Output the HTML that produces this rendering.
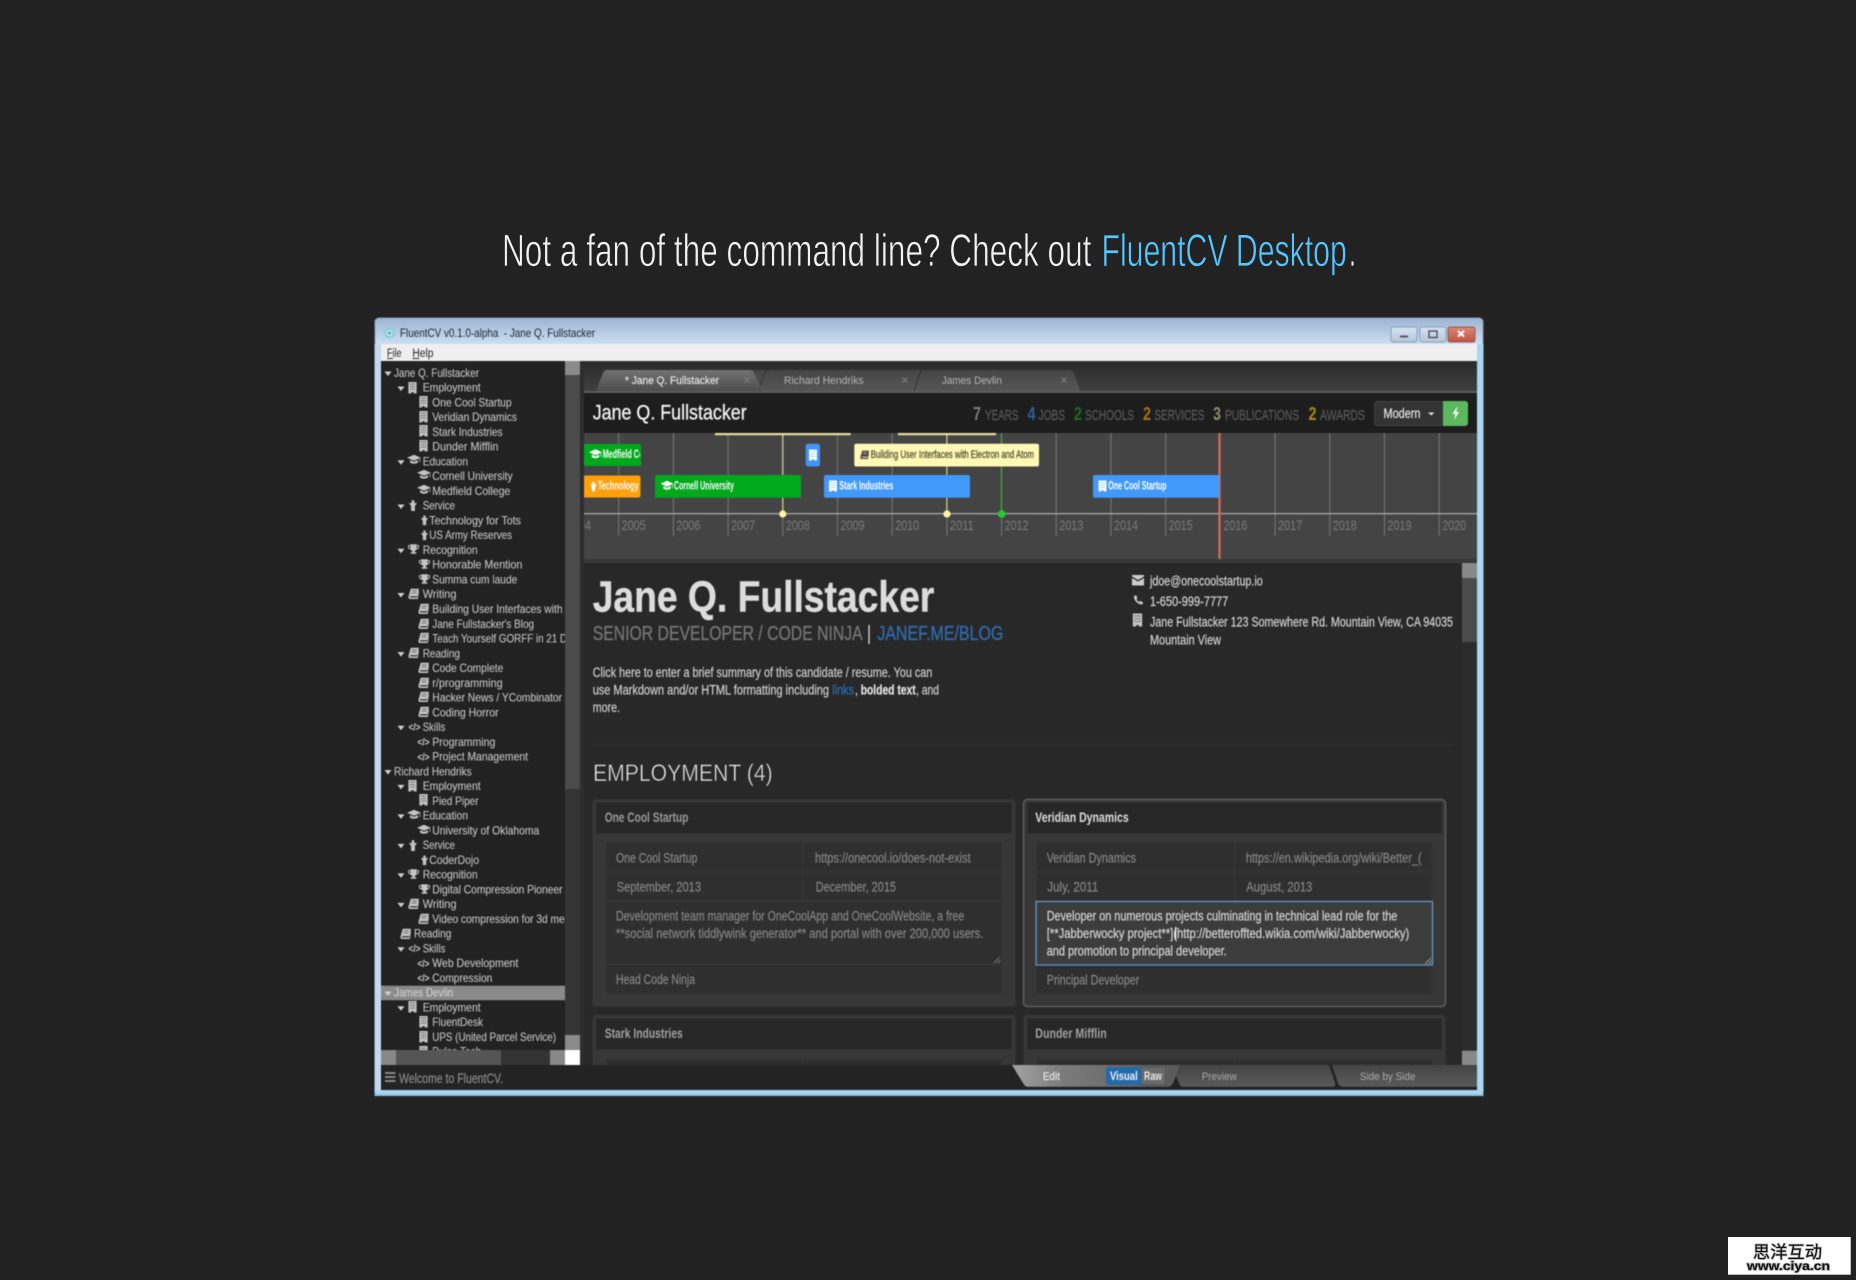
<!DOCTYPE html>
<html lang="en"><head><meta charset="utf-8"><title>FluentCV Desktop</title>
<style>
html,body{margin:0;padding:0;background:#222;width:1856px;height:1280px;overflow:hidden}
svg{display:block;font-family:"Liberation Sans",Arial,sans-serif}
text{white-space:pre}
.w{filter:blur(.45px)}
</style></head><body>
<svg xmlns="http://www.w3.org/2000/svg" width="1856" height="1280" viewBox="0 0 1856 1280">
<defs>
<linearGradient id="tb" x1="0" y1="0" x2="0" y2="1"><stop offset="0" stop-color="#9db4d2"/><stop offset="1" stop-color="#cbdef2"/></linearGradient>
<linearGradient id="tbar" x1="0" y1="0" x2="0" y2="1"><stop offset="0" stop-color="#2a2a2a"/><stop offset="1" stop-color="#414141"/></linearGradient>
<linearGradient id="t1" x1="0" y1="0" x2="0" y2="1"><stop offset="0" stop-color="#727272"/><stop offset="1" stop-color="#4e4e4e"/></linearGradient>
<linearGradient id="t2" x1="0" y1="0" x2="0" y2="1"><stop offset="0" stop-color="#454545"/><stop offset="1" stop-color="#565656"/></linearGradient>
<linearGradient id="edit" x1="0" y1="0" x2="1" y2="0"><stop offset="0" stop-color="#a2a2a2"/><stop offset=".3" stop-color="#7c7c7c"/><stop offset="1" stop-color="#585858"/></linearGradient>
<linearGradient id="bt" x1="0" y1="0" x2="0" y2="1"><stop offset="0" stop-color="#444"/><stop offset="1" stop-color="#5a5a5a"/></linearGradient>
<linearGradient id="wb" x1="0" y1="0" x2="0" y2="1"><stop offset="0" stop-color="#d6e2f0"/><stop offset="1" stop-color="#b4c8de"/></linearGradient>
<linearGradient id="wc" x1="0" y1="0" x2="0" y2="1"><stop offset="0" stop-color="#d78a78"/><stop offset="1" stop-color="#bf5440"/></linearGradient>
<symbol id="bd" viewBox="0 0 10 14"><path fill-rule="evenodd" d="M0 0h10v14H6.500v-1.500h-3V14H0zM2.200 2.200v1h1.200v-1zM4.400 2.200v1h1.200v-1zM6.600 2.200v1h1.200v-1zM2.200 5.200v1h1.200v-1zM4.400 5.200v1h1.200v-1zM6.600 5.200v1h1.200v-1zM2.200 8.200v1h1.200v-1zM4.400 8.200v1h1.200v-1zM6.600 8.200v1h1.200v-1z"/></symbol>
<symbol id="cap" viewBox="0 0 16 14" preserveAspectRatio="none"><path d="M8 2 16 5.500 8 9 0 5.500zM3.500 8.300v3c2.500 1.600 6.500 1.600 9 0v-3L8 10.300zM14.300 6.800v4h.8v-4.400z"/></symbol>
<symbol id="sv" viewBox="0 0 10 14"><circle cx="5" cy="2" r="1.900"/><path d="M0 3.800h10L7.400 8v6H2.600V8z"/></symbol>
<symbol id="tr" viewBox="0 0 14 14"><path fill-rule="evenodd" d="M3 1h8v1h3v2.600c0 1.600-1.500 2.800-3.300 3-.5.9-1.300 1.500-2.200 1.800V11h2v2H3.500v-2h2V9.400C4.600 9.100 3.800 8.500 3.300 7.600 1.500 7.400 0 6.200 0 4.600V2h3zM1.200 3.200v1.400c0 .8.800 1.500 1.800 1.700V3.200zM11 3.200v3.100c1-.2 1.800-.9 1.800-1.700V3.200z"/></symbol>
<symbol id="bk" viewBox="0 0 14 14"><path d="M3.500 1H14l-2 9.500H3.500c-1.300 0-1.300 1.500 0 1.500H12l1.300-7.500.7.500L12.600 14H2.500C.8 14 .2 12.700.6 11zM5 3.500v.7h6l.2-.7zM4.500 6v.7h6l.2-.7z"/></symbol>
<clipPath id="cs"><rect x="381" y="361" width="184" height="689"/></clipPath>
<clipPath id="ct"><rect x="584" y="433" width="893" height="126"/></clipPath>
<clipPath id="cm"><rect x="584" y="563" width="878" height="502"/></clipPath>
</defs>

<rect width="1856" height="1280" fill="#222"/>

<!-- Heading -->
<g font-size="45" stroke="#222" stroke-width=".75">
<text x="502" y="266" fill="#f2f2f2" textLength="589.400" lengthAdjust="spacingAndGlyphs">Not a fan of the command line? Check out</text>
<text x="1101.500" y="266" fill="#55c6ff" textLength="245.300" lengthAdjust="spacingAndGlyphs">FluentCV Desktop</text>
<text x="1349" y="266" fill="#f2f2f2" textLength="7" lengthAdjust="spacingAndGlyphs">.</text>
</g>

<g class="w">
<!-- Window frame -->
<rect x="374.500" y="318" width="1109" height="778" rx="4" fill="#aad4f0"/>
<rect x="375" y="344" width="6" height="746" fill="#c4d9ec"/>
<rect x="374.500" y="1094" width="1109" height="2" fill="#8fc6d8"/>
<path d="M375 344V322a4 4 0 0 1 4-4H1479a4 4 0 0 1 4 4V344z" fill="url(#tb)"/>
<path d="M375 344V322a4 4 0 0 1 4-4H1479a4 4 0 0 1 4 4V344" fill="none" stroke="#8c9bad" stroke-width="1"/>
<circle cx="389.500" cy="333" r="5.500" fill="#8fcfdd"/><circle cx="389.500" cy="333" r="3" fill="#c8e8ee"/><circle cx="389.500" cy="333" r="1.500" fill="#4ea4b8"/>
<text x="400" y="337" font-size="12" fill="#1c2430" textLength="195" lengthAdjust="spacingAndGlyphs">FluentCV v0.1.0-alpha  - Jane Q. Fullstacker</text>
<rect x="1391" y="327" width="26" height="15" rx="2" fill="url(#wb)" stroke="#8aa0bb"/>
<rect x="1400" y="335.500" width="8" height="2" fill="#556"/>
<rect x="1420" y="327" width="26" height="15" rx="2" fill="url(#wb)" stroke="#8aa0bb"/>
<rect x="1429" y="331" width="8" height="6.500" fill="none" stroke="#445" stroke-width="1.300"/>
<rect x="1448" y="327" width="27" height="15" rx="2" fill="url(#wc)" stroke="#96594e"/>
<path d="M1458 331l6 5.500m0-5.500l-6 5.500" stroke="#fff" stroke-width="2" fill="none"/>

<!-- Menu -->
<rect x="381" y="344" width="1096" height="17" fill="#efefef"/>
<text x="387" y="357" font-size="11.500" fill="#222" textLength="14.500" lengthAdjust="spacingAndGlyphs">File</text>
<text x="412.400" y="357" font-size="11.500" fill="#222" textLength="21" lengthAdjust="spacingAndGlyphs">Help</text>
<path d="M387 358.500h6M412.400 358.500h7" stroke="#333" stroke-width="1"/>

<!-- Sidebar -->
<rect x="381" y="361" width="184" height="704" fill="#222"/>
<rect x="381" y="985.700" width="184" height="14.500" fill="#8a8a8a"/>
<g clip-path="url(#cs)">
<path fill="#d0d0d0" d="M384.500 371.500h7l-3.500 4.500zM384.500 770h7l-3.500 4.500zM384.500 991.500h7l-3.500 4.500zM397.500 386.500h7l-3.500 4.500zM397.500 460.200h7l-3.500 4.500zM397.500 504.500h7l-3.500 4.500zM397.500 548.800h7l-3.500 4.500zM397.500 593h7l-3.500 4.500zM397.500 652.100h7l-3.500 4.500zM397.500 725.800h7l-3.500 4.500zM397.500 784.900h7l-3.500 4.500zM397.500 814.400h7l-3.500 4.500zM397.500 843.900h7l-3.500 4.500zM397.500 873.400h7l-3.500 4.500zM397.500 902.900h7l-3.500 4.500zM397.500 947.200h7l-3.500 4.500zM397.500 1006.200h7l-3.500 4.500z"/>
<g fill="#c4c4c4">
<use href="#bd" x="408" y="382" width="9" height="11.500"/>
<use href="#bd" x="419" y="396" width="9" height="11.500"/>
<use href="#bd" x="419" y="411" width="9" height="11.500"/>
<use href="#bd" x="419" y="425" width="9" height="11.500"/>
<use href="#bd" x="419" y="440" width="9" height="11.500"/>
<use href="#cap" x="407" y="453" width="14" height="12"/>
<use href="#cap" x="417" y="468" width="14" height="12"/>
<use href="#cap" x="417" y="483" width="14" height="12"/>
<use href="#sv" x="409" y="500" width="8" height="11"/>
<use href="#sv" x="421" y="515" width="7" height="10.500"/>
<use href="#sv" x="421" y="530" width="7" height="10.500"/>
<use href="#tr" x="408" y="543" width="11" height="12"/>
<use href="#tr" x="419" y="558" width="11" height="12"/>
<use href="#tr" x="419" y="573" width="11" height="12"/>
<use href="#bk" x="408" y="588" width="11" height="11"/>
<use href="#bk" x="418" y="603" width="11" height="11"/>
<use href="#bk" x="418" y="618" width="11" height="11"/>
<use href="#bk" x="418" y="632" width="11" height="11"/>
<use href="#bk" x="408" y="647" width="11" height="11"/>
<use href="#bk" x="418" y="662" width="11" height="11"/>
<use href="#bk" x="418" y="677" width="11" height="11"/>
<use href="#bk" x="418" y="691" width="11" height="11"/>
<use href="#bk" x="418" y="706" width="11" height="11"/>
<use href="#bd" x="408" y="780" width="9" height="11.500"/>
<use href="#bd" x="419" y="794" width="9" height="11.500"/>
<use href="#cap" x="407" y="808" width="14" height="12"/>
<use href="#cap" x="417" y="823" width="14" height="12"/>
<use href="#sv" x="409" y="840" width="8" height="11"/>
<use href="#sv" x="421" y="855" width="7" height="10.500"/>
<use href="#tr" x="408" y="868" width="11" height="12"/>
<use href="#tr" x="419" y="883" width="11" height="12"/>
<use href="#bk" x="408" y="898" width="11" height="11"/>
<use href="#bk" x="418" y="913" width="11" height="11"/>
<use href="#bk" x="400" y="928" width="11" height="11"/>
<use href="#bd" x="408" y="1001" width="9" height="11.500"/>
<use href="#bd" x="419" y="1016" width="9" height="11.500"/>
<use href="#bd" x="419" y="1031" width="9" height="11.500"/>
<use href="#bd" x="419" y="1046" width="9" height="11.500"/>
</g>
<g font-size="12" fill="#c2c2c2" stroke="#c2c2c2" stroke-width=".12" transform="translate(0,-.4)">
<text x="394" y="377.300" textLength="85" lengthAdjust="spacingAndGlyphs">Jane Q. Fullstacker</text>
<text x="422.700" y="392.100" textLength="58" lengthAdjust="spacingAndGlyphs">Employment</text>
<text x="432.300" y="406.800" textLength="79.300" lengthAdjust="spacingAndGlyphs">One Cool Startup</text>
<text x="432.300" y="421.600" textLength="84.700" lengthAdjust="spacingAndGlyphs">Veridian Dynamics</text>
<text x="432.300" y="436.300" textLength="70.300" lengthAdjust="spacingAndGlyphs">Stark Industries</text>
<text x="432.300" y="451.100" textLength="66" lengthAdjust="spacingAndGlyphs">Dunder Mifflin</text>
<text x="422.700" y="465.800" textLength="45.300" lengthAdjust="spacingAndGlyphs">Education</text>
<text x="432.300" y="480.600" textLength="80.300" lengthAdjust="spacingAndGlyphs">Cornell University</text>
<text x="432.300" y="495.300" textLength="78" lengthAdjust="spacingAndGlyphs">Medfield College</text>
<text x="422.700" y="510.100" textLength="32.300" lengthAdjust="spacingAndGlyphs">Service</text>
<text x="429.300" y="524.900" textLength="91.700" lengthAdjust="spacingAndGlyphs">Technology for Tots</text>
<text x="429.300" y="539.600" textLength="82.700" lengthAdjust="spacingAndGlyphs">US Army Reserves</text>
<text x="422.700" y="554.400" textLength="55" lengthAdjust="spacingAndGlyphs">Recognition</text>
<text x="432.300" y="569.100" textLength="90" lengthAdjust="spacingAndGlyphs">Honorable Mention</text>
<text x="432.300" y="583.900" textLength="85" lengthAdjust="spacingAndGlyphs">Summa cum laude</text>
<text x="422.700" y="598.600" textLength="33.700" lengthAdjust="spacingAndGlyphs">Writing</text>
<text x="432.300" y="613.400" textLength="130.300" lengthAdjust="spacingAndGlyphs">Building User Interfaces with</text>
<text x="432.300" y="628.200" textLength="101.700" lengthAdjust="spacingAndGlyphs">Jane Fullstacker's Blog</text>
<text x="432.300" y="642.900" textLength="150" lengthAdjust="spacingAndGlyphs">Teach Yourself GORFF in 21 Days</text>
<text x="422.700" y="657.700" textLength="37.300" lengthAdjust="spacingAndGlyphs">Reading</text>
<text x="432.300" y="672.400" textLength="71" lengthAdjust="spacingAndGlyphs">Code Complete</text>
<text x="432.300" y="687.200" textLength="70.300" lengthAdjust="spacingAndGlyphs">r/programming</text>
<text x="432.300" y="701.900" textLength="129.700" lengthAdjust="spacingAndGlyphs">Hacker News / YCombinator</text>
<text x="432.300" y="716.700" textLength="66.300" lengthAdjust="spacingAndGlyphs">Coding Horror</text>
<text x="422.700" y="731.400" textLength="22.700" lengthAdjust="spacingAndGlyphs">Skills</text>
<text x="432.300" y="746.200" textLength="63" lengthAdjust="spacingAndGlyphs">Programming</text>
<text x="432.300" y="761" textLength="95.700" lengthAdjust="spacingAndGlyphs">Project Management</text>
<text x="394" y="775.700" textLength="77.700" lengthAdjust="spacingAndGlyphs">Richard Hendriks</text>
<text x="422.700" y="790.500" textLength="58" lengthAdjust="spacingAndGlyphs">Employment</text>
<text x="432.300" y="805.200" textLength="46.300" lengthAdjust="spacingAndGlyphs">Pied Piper</text>
<text x="422.700" y="820" textLength="45.300" lengthAdjust="spacingAndGlyphs">Education</text>
<text x="432.300" y="834.700" textLength="107" lengthAdjust="spacingAndGlyphs">University of Oklahoma</text>
<text x="422.700" y="849.500" textLength="32.300" lengthAdjust="spacingAndGlyphs">Service</text>
<text x="429.300" y="864.200" textLength="49.700" lengthAdjust="spacingAndGlyphs">CoderDojo</text>
<text x="422.700" y="879" textLength="55" lengthAdjust="spacingAndGlyphs">Recognition</text>
<text x="432.300" y="893.800" textLength="130.300" lengthAdjust="spacingAndGlyphs">Digital Compression Pioneer</text>
<text x="422.700" y="908.500" textLength="33.700" lengthAdjust="spacingAndGlyphs">Writing</text>
<text x="432.300" y="923.300" textLength="146" lengthAdjust="spacingAndGlyphs">Video compression for 3d media</text>
<text x="414" y="938" textLength="37.300" lengthAdjust="spacingAndGlyphs">Reading</text>
<text x="422.700" y="952.800" textLength="22.700" lengthAdjust="spacingAndGlyphs">Skills</text>
<text x="432.300" y="967.500" textLength="86" lengthAdjust="spacingAndGlyphs">Web Development</text>
<text x="432.300" y="982.300" textLength="60" lengthAdjust="spacingAndGlyphs">Compression</text>
<text x="394" y="997.100" textLength="59.300" lengthAdjust="spacingAndGlyphs" fill="#d4d4d4">James Devlin</text>
<text x="422.700" y="1011.800" textLength="58" lengthAdjust="spacingAndGlyphs">Employment</text>
<text x="432.300" y="1026.600" textLength="50.700" lengthAdjust="spacingAndGlyphs">FluentDesk</text>
<text x="432.300" y="1041.300" textLength="123.700" lengthAdjust="spacingAndGlyphs">UPS (United Parcel Service)</text>
<text x="432.300" y="1056.100" textLength="49" lengthAdjust="spacingAndGlyphs">Pulse Tech</text>
<text x="408.500" y="731" font-size="10" textLength="12" lengthAdjust="spacingAndGlyphs" font-weight="bold">&lt;/&gt;</text>
<text x="417.500" y="746" font-size="10" textLength="12" lengthAdjust="spacingAndGlyphs" font-weight="bold">&lt;/&gt;</text>
<text x="417.500" y="761" font-size="10" textLength="12" lengthAdjust="spacingAndGlyphs" font-weight="bold">&lt;/&gt;</text>
<text x="408.500" y="952.500" font-size="10" textLength="12" lengthAdjust="spacingAndGlyphs" font-weight="bold">&lt;/&gt;</text>
<text x="417.500" y="967.500" font-size="10" textLength="12" lengthAdjust="spacingAndGlyphs" font-weight="bold">&lt;/&gt;</text>
<text x="417.500" y="982" font-size="10" textLength="12" lengthAdjust="spacingAndGlyphs" font-weight="bold">&lt;/&gt;</text>
</g>
</g>
<!-- Sidebar scrollbars -->
<rect x="565" y="361" width="15" height="689" fill="#353535"/>
<rect x="565" y="375" width="15" height="414" fill="#4b4b4b"/>
<rect x="565" y="361" width="15" height="14" fill="#8a8a8a"/>
<rect x="565" y="1035" width="15" height="15" fill="#8a8a8a"/>
<rect x="565" y="1050" width="15" height="15" fill="#fff"/>
<rect x="381" y="1050" width="184" height="15" fill="#333"/>
<rect x="381" y="1050" width="15" height="15" fill="#888"/>
<rect x="396" y="1050" width="105" height="15" fill="#555"/>
<rect x="550" y="1050" width="15" height="15" fill="#888"/>
<rect x="580" y="361" width="4" height="704" fill="#2d2d2d"/>

<!-- Tab bar -->
<rect x="584" y="361" width="893" height="32" fill="url(#tbar)"/>
<rect x="584" y="391" width="893" height="2" fill="#5c5c5c"/>
<path d="M762 391 753 372.500q-1-2.500-4-2.500H908q4 0 5 3l6 18z" fill="url(#t2)"/>
<path d="M918 391 913 373q-1-3-4-3H1069q4 0 5 3l6 18z" fill="url(#t2)"/>
<path d="M758 391 765 373q1-3 4-3h1M914 391 920 373q1-3 4-3h1" stroke="#333" stroke-width="1" fill="none"/>
<path d="M596 391 603 373q1-3 4-3H749q4 0 5 3l8.500 18z" fill="url(#t1)"/>
<g font-size="11">
<text x="625" y="384" fill="#e8e8e8" stroke="#e8e8e8" stroke-width=".15" textLength="94" lengthAdjust="spacingAndGlyphs">* Jane Q. Fullstacker</text>
<text x="784" y="384" fill="#b4b4b4" textLength="79.600" lengthAdjust="spacingAndGlyphs">Richard Hendriks</text>
<text x="941.700" y="384" fill="#b4b4b4" textLength="60.300" lengthAdjust="spacingAndGlyphs">James Devlin</text>
</g>
<path d="M744.500 377.500l5 5m0-5l-5 5M902.500 377.500l5 5m0-5l-5 5M1061.500 377.500l5 5m0-5l-5 5" stroke="#7e7e7e" stroke-width="1.200" fill="none"/>

<!-- Header -->
<rect x="584" y="393" width="893" height="40" fill="#1d1d1d"/>
<text x="592.700" y="419.500" font-size="21.500" fill="#f4f4f4" stroke="#f4f4f4" stroke-width=".3" textLength="154" lengthAdjust="spacingAndGlyphs">Jane Q. Fullstacker</text>
<g font-size="18.500" font-weight="bold">
<text x="973" y="420" fill="#7c7c7c" textLength="8" lengthAdjust="spacingAndGlyphs">7</text>
<text x="1027.500" y="420" fill="#2c5f9c" textLength="8" lengthAdjust="spacingAndGlyphs">4</text>
<text x="1074" y="420" fill="#1c6a22" textLength="8" lengthAdjust="spacingAndGlyphs">2</text>
<text x="1143" y="420" fill="#a8720f" textLength="8" lengthAdjust="spacingAndGlyphs">2</text>
<text x="1213" y="420" fill="#8e8e62" textLength="8" lengthAdjust="spacingAndGlyphs">3</text>
<text x="1308.500" y="420" fill="#a68a1a" textLength="8" lengthAdjust="spacingAndGlyphs">2</text>
</g>
<g font-size="15" fill="#585858" stroke="#585858" stroke-width=".25">
<text x="985" y="420" textLength="33.500" lengthAdjust="spacingAndGlyphs">YEARS</text>
<text x="1038.500" y="420" textLength="26.500" lengthAdjust="spacingAndGlyphs">JOBS</text>
<text x="1085" y="420" textLength="49" lengthAdjust="spacingAndGlyphs">SCHOOLS</text>
<text x="1154.500" y="420" textLength="50" lengthAdjust="spacingAndGlyphs">SERVICES</text>
<text x="1225" y="420" textLength="74" lengthAdjust="spacingAndGlyphs">PUBLICATIONS</text>
<text x="1320" y="420" textLength="45" lengthAdjust="spacingAndGlyphs">AWARDS</text>
</g>
<rect x="1374.500" y="401.500" width="70" height="24" rx="3" fill="#333" stroke="#444"/>
<text x="1383.500" y="418" font-size="14" fill="#e2e2e2" stroke="#e2e2e2" stroke-width=".25" textLength="37" lengthAdjust="spacingAndGlyphs">Modern</text>
<path d="M1428 412.500h6.500l-3.250 3z" fill="#ddd"/>
<path d="M1443 401h22a3 3 0 0 1 3 3v19a3 3 0 0 1-3 3h-22z" fill="#5cb85c"/>
<path d="M1457 407l-4.500 7h3l-1.500 6 5-8h-3l1.500-5z" fill="#fff"/>

<!-- Timeline -->
<rect x="584" y="433" width="893" height="126" fill="#444"/>
<rect x="584" y="559" width="893" height="4" fill="#383838"/>
<g clip-path="url(#ct)">
<path stroke="#6f6f6f" stroke-width="1.200" fill="none" d="M618.700 433V536M673.400 433V536M728.100 433V536M782.800 433V536M837.500 433V536M892.200 433V536M946.900 433V536M1001.600 433V536M1056.300 433V536M1111 433V536M1165.700 433V536M1275.100 433V536M1329.800 433V536M1384.500 433V536M1439.200 433V536"/>
<rect x="584" y="513" width="893" height="1.300" fill="#a8a8a8"/>
<g font-size="14" fill="#757575" stroke="#757575" stroke-width=".15">
<text x="567" y="530" textLength="24" lengthAdjust="spacingAndGlyphs">2004</text>
<text x="621.700" y="530" textLength="24" lengthAdjust="spacingAndGlyphs">2005</text>
<text x="676.400" y="530" textLength="24" lengthAdjust="spacingAndGlyphs">2006</text>
<text x="731.100" y="530" textLength="24" lengthAdjust="spacingAndGlyphs">2007</text>
<text x="785.800" y="530" textLength="24" lengthAdjust="spacingAndGlyphs">2008</text>
<text x="840.500" y="530" textLength="24" lengthAdjust="spacingAndGlyphs">2009</text>
<text x="895.200" y="530" textLength="24" lengthAdjust="spacingAndGlyphs">2010</text>
<text x="949.900" y="530" textLength="24" lengthAdjust="spacingAndGlyphs">2011</text>
<text x="1004.600" y="530" textLength="24" lengthAdjust="spacingAndGlyphs">2012</text>
<text x="1059.300" y="530" textLength="24" lengthAdjust="spacingAndGlyphs">2013</text>
<text x="1114" y="530" textLength="24" lengthAdjust="spacingAndGlyphs">2014</text>
<text x="1168.700" y="530" textLength="24" lengthAdjust="spacingAndGlyphs">2015</text>
<text x="1223.400" y="530" textLength="24" lengthAdjust="spacingAndGlyphs">2016</text>
<text x="1278.100" y="530" textLength="24" lengthAdjust="spacingAndGlyphs">2017</text>
<text x="1332.800" y="530" textLength="24" lengthAdjust="spacingAndGlyphs">2018</text>
<text x="1387.500" y="530" textLength="24" lengthAdjust="spacingAndGlyphs">2019</text>
<text x="1442.200" y="530" textLength="24" lengthAdjust="spacingAndGlyphs">2020</text>
</g>
<rect x="715" y="433" width="135.700" height="2.200" fill="#e6dfa0"/>
<rect x="898" y="433" width="98" height="2.200" fill="#e6dfa0"/>
<path d="M782.800 435V514M946.900 435V514" stroke="#d4cd8e" stroke-width="1.200"/>
<path d="M1001.400 433V514" stroke="#35b035" stroke-width="1.200"/>
<circle cx="782.800" cy="514" r="3.600" fill="#fff5a8"/>
<circle cx="947" cy="514" r="3.600" fill="#fff5a8"/>
<circle cx="1001.700" cy="514" r="3.800" fill="#1fcf2f"/>
<rect x="1218.400" y="433" width="2.200" height="126" fill="#d9695f"/>

<rect x="580" y="444" width="61" height="22" rx="2" fill="#00a81c"/>
<rect x="580" y="475.500" width="60.500" height="22" rx="2" fill="#ff9f0a"/>
<rect x="655" y="475" width="146" height="22.700" rx="2" fill="#00a81c"/>
<rect x="805.700" y="443.700" width="14.300" height="22.800" rx="2.500" fill="#3f96fb"/>
<rect x="824" y="475" width="146" height="22.700" rx="2" fill="#4099fb"/>
<rect x="854.300" y="443.700" width="184.700" height="22.800" rx="2" fill="#fff9b5"/>
<rect x="1093" y="475" width="126.300" height="22.700" rx="2" fill="#4099fb"/>
<g fill="#fff">
<use href="#cap" x="589" y="447.500" width="13" height="12"/>
<use href="#sv" x="590" y="481" width="7" height="11"/>
<use href="#cap" x="660.500" y="479" width="13" height="12"/>
<use href="#bd" x="809" y="449.500" width="8" height="11"/>
<use href="#bd" x="829" y="480.500" width="8" height="11"/>
<use href="#bd" x="1098.500" y="480.500" width="8" height="11"/>
</g>
<use href="#bk" x="860" y="449.500" width="9" height="10" fill="#444"/>
<g font-size="11.500" font-weight="bold" fill="#fff">
<svg x="584" y="440" width="56" height="60"><text x="18.700" y="18" textLength="57" lengthAdjust="spacingAndGlyphs">Medfield College</text><text x="13.700" y="49.500" textLength="70" lengthAdjust="spacingAndGlyphs">Technology for Tots</text></svg>
<text x="674" y="489.500" textLength="60" lengthAdjust="spacingAndGlyphs">Cornell University</text>
<text x="839.300" y="489.500" textLength="54" lengthAdjust="spacingAndGlyphs">Stark Industries</text>
<text x="1108.300" y="489.500" textLength="58.300" lengthAdjust="spacingAndGlyphs">One Cool Startup</text>
</g>
<text x="870.700" y="458" font-size="11" fill="#46462e" stroke="#46462e" stroke-width=".2" textLength="163.300" lengthAdjust="spacingAndGlyphs">Building User Interfaces with Electron and Atom</text>
</g>

<!-- Main -->
<rect x="584" y="563" width="878" height="502" fill="#282828"/>
<g clip-path="url(#cm)">
<text x="592.700" y="611.700" font-size="43.500" font-weight="bold" fill="#dcdcdc" stroke="#dcdcdc" stroke-width=".4" textLength="341.600" lengthAdjust="spacingAndGlyphs">Jane Q. Fullstacker</text>
<g font-size="20.500">
<text x="592.700" y="640" fill="#777" stroke="#777" stroke-width=".25" textLength="270" lengthAdjust="spacingAndGlyphs">SENIOR DEVELOPER / CODE NINJA</text>
<text x="867" y="640" fill="#ddd" textLength="4" lengthAdjust="spacingAndGlyphs">|</text>
<text x="877.300" y="640" fill="#2f6db3" stroke="#2f6db3" stroke-width=".25" textLength="126" lengthAdjust="spacingAndGlyphs">JANEF.ME/BLOG</text>
</g>
<g font-size="13.500" fill="#cdcdcd" stroke="#cdcdcd" stroke-width=".22" transform="translate(0,-.4)">
<text x="592.700" y="677.300" textLength="339.600" lengthAdjust="spacingAndGlyphs">Click here to enter a brief summary of this candidate / resume. You can</text>
<text x="592.700" y="695" textLength="236.300" lengthAdjust="spacingAndGlyphs">use Markdown and/or HTML formatting including</text>
<text x="832.300" y="695" textLength="21.700" lengthAdjust="spacingAndGlyphs" fill="#2f6db3" stroke="#2f6db3">links</text>
<text x="855" y="695" textLength="3" lengthAdjust="spacingAndGlyphs">,</text>
<text x="860.700" y="695" textLength="55" lengthAdjust="spacingAndGlyphs" font-weight="bold" fill="#e4e4e4" stroke="#e4e4e4">bolded text</text>
<text x="916" y="695" textLength="23" lengthAdjust="spacingAndGlyphs">, and</text>
<text x="592.700" y="712.300" textLength="27.300" lengthAdjust="spacingAndGlyphs">more.</text>
</g>
<rect x="592" y="744" width="861" height="1" fill="#323232"/>
<text x="593" y="781" font-size="24.500" fill="#e6e6e6" stroke="#282828" stroke-width=".5" textLength="179.700" lengthAdjust="spacingAndGlyphs">EMPLOYMENT (4)</text>
<!-- contact -->
<path d="M1132 575h12v1.500l-6 3.500-6-3.500zM1132 578l6 3.500 6-3.500V585.500h-12z" fill="#ccc"/>
<path d="M1134 596l2-.8 1.500 3-1 1c.5 1.200 1.500 2.200 2.700 2.700l1-1 3 1.500-.8 2c-4.500 .5-9-4.500-8.400-8.400z" fill="#ccc"/>
<use href="#bd" x="1132.500" y="613.500" width="10" height="13" fill="#c4c4c4"/>
<g font-size="13.500" fill="#d2d2d2" stroke="#d2d2d2" stroke-width=".22" transform="translate(0,-.6)">
<text x="1150" y="586" textLength="112.700" lengthAdjust="spacingAndGlyphs">jdoe@onecoolstartup.io</text>
<text x="1150" y="606.500" textLength="78.300" lengthAdjust="spacingAndGlyphs">1-650-999-7777</text>
<text x="1150" y="627" textLength="303" lengthAdjust="spacingAndGlyphs">Jane Fullstacker 123 Somewhere Rd. Mountain View, CA 94035</text>
<text x="1150" y="645" textLength="71" lengthAdjust="spacingAndGlyphs">Mountain View</text>
</g>

<!-- Card 1 -->
<rect x="592.500" y="799.500" width="423" height="207" rx="3" fill="#373737" stroke="#303030"/>
<rect x="596" y="802.700" width="415.700" height="30.600" fill="#272727"/>
<rect x="606" y="842.700" width="395.700" height="150.600" fill="#2f2f2f"/>
<path d="M606 872h395.700M606 901h395.700M606 964.500h395.700M802.700 842.700V901" stroke="#3a3a3a" stroke-width="1"/>
<!-- Card 2 -->
<rect x="1023.500" y="799.500" width="422" height="207" rx="4" fill="#373737" stroke="#5c5c5c" stroke-width="1.500"/>
<rect x="1027.300" y="802.700" width="414.400" height="30.600" fill="#272727"/>
<rect x="1036.700" y="842.700" width="395.300" height="150.600" fill="#2f2f2f"/>
<path d="M1036.700 872h395.300M1036.700 901h395.300M1234.300 842.700V901" stroke="#3a3a3a" stroke-width="1"/>
<rect x="1036" y="901.500" width="396.500" height="63.500" fill="#3c3c3c" stroke="#5f9ccb" stroke-width="1.200"/>
<!-- Card 3,4 -->
<rect x="592.500" y="1015" width="423" height="80" rx="3" fill="#373737" stroke="#303030"/>
<rect x="596" y="1018.700" width="415.700" height="30.600" fill="#272727"/>
<rect x="606" y="1059.300" width="395.700" height="40" fill="#2f2f2f"/>
<path d="M802.700 1059.300V1070" stroke="#3a3a3a"/>
<rect x="1023.500" y="1015" width="422" height="80" rx="3" fill="#373737" stroke="#303030"/>
<rect x="1027.300" y="1018.700" width="414.400" height="30.600" fill="#272727"/>
<rect x="1036.700" y="1059.300" width="395.300" height="40" fill="#2f2f2f"/>
<path d="M1234.300 1059.300V1070" stroke="#3a3a3a"/>

<g font-size="13.500" font-weight="bold" transform="translate(0,-.7)">
<text x="604.700" y="822.700" fill="#9a9a9a" textLength="83.600" lengthAdjust="spacingAndGlyphs">One Cool Startup</text>
<text x="1035.300" y="822.700" fill="#dedede" textLength="93.400" lengthAdjust="spacingAndGlyphs">Veridian Dynamics</text>
<text x="604.700" y="1038.700" fill="#a0a0a0" textLength="78" lengthAdjust="spacingAndGlyphs">Stark Industries</text>
<text x="1035.300" y="1038.700" fill="#a0a0a0" textLength="71.400" lengthAdjust="spacingAndGlyphs">Dunder Mifflin</text>
</g>
<g font-size="13.500" fill="#888" stroke="#888" stroke-width=".15">
<text x="616" y="862.300" textLength="81.300" lengthAdjust="spacingAndGlyphs">One Cool Startup</text>
<text x="815" y="862.300" textLength="155.700" lengthAdjust="spacingAndGlyphs">https://onecool.io/does-not-exist</text>
<text x="616.700" y="891.700" textLength="84.300" lengthAdjust="spacingAndGlyphs">September, 2013</text>
<text x="815.700" y="891.700" textLength="80.300" lengthAdjust="spacingAndGlyphs">December, 2015</text>
<text x="616" y="920.700" textLength="348.300" lengthAdjust="spacingAndGlyphs">Development team manager for OneCoolApp and OneCoolWebsite, a free</text>
<text x="616" y="938" textLength="367.300" lengthAdjust="spacingAndGlyphs">**social network tiddlywink generator** and portal with over 200,000 users.</text>
<text x="616" y="984" textLength="79" lengthAdjust="spacingAndGlyphs">Head Code Ninja</text>
<text x="1046.700" y="862.300" textLength="89.300" lengthAdjust="spacingAndGlyphs">Veridian Dynamics</text>
<text x="1245.700" y="862.300" textLength="176" lengthAdjust="spacingAndGlyphs">https://en.wikipedia.org/wiki/Better_(</text>
<text x="1047.300" y="891.700" textLength="51" lengthAdjust="spacingAndGlyphs">July, 2011</text>
<text x="1246.300" y="891.700" textLength="66" lengthAdjust="spacingAndGlyphs">August, 2013</text>
<text x="1046.700" y="984.700" textLength="92.600" lengthAdjust="spacingAndGlyphs">Principal Developer</text>
</g>
<g font-size="13.500" fill="#d6d6d6" stroke="#d6d6d6" stroke-width=".22">
<text x="1046.700" y="920.700" textLength="350.600" lengthAdjust="spacingAndGlyphs">Developer on numerous projects culminating in technical lead role for the</text>
<text x="1046.700" y="938" textLength="362.600" lengthAdjust="spacingAndGlyphs">[**Jabberwocky project**](http://betteroffted.wikia.com/wiki/Jabberwocky)</text>
<text x="1046.700" y="955.500" textLength="180" lengthAdjust="spacingAndGlyphs">and promotion to principal developer.</text>
</g>
<rect x="1175" y="927" width="1.300" height="13" fill="#eee"/>
<path d="M994 963l6-6M997.500 963l3-3" stroke="#777" stroke-width="1" fill="none"/>
<path d="M1425 964l6-6M1428.500 964l3-3" stroke="#999" stroke-width="1" fill="none"/>
</g>

<!-- Main scrollbar -->
<rect x="1462" y="563" width="15" height="502" fill="#2c2c2c"/>
<rect x="1462" y="578" width="15" height="64" fill="#4b4b4b"/>
<rect x="1462" y="563" width="15" height="15" fill="#888"/>
<rect x="1462" y="1050.700" width="15" height="14.300" fill="#888"/>

<!-- Status bar -->
<rect x="381" y="1065" width="1096" height="25" fill="#232323"/>
<path d="M385 1073h10.500M385 1077h10.500M385 1081h10.500" stroke="#949494" stroke-width="1.800"/>
<text x="399" y="1083" font-size="14" fill="#8a8a8a" stroke="#8a8a8a" stroke-width=".2" textLength="104" lengthAdjust="spacingAndGlyphs">Welcome to FluentCV.</text>
<path d="M1332 1065h145v21.700h-134q-3 0-5-3.500z" fill="url(#bt)"/>
<path d="M1175 1065h154l6 18q1 3.700-3 3.700H1183q-3 0-4-3.700l-5-12q-1-3 1-6z" fill="url(#bt)"/>
<path d="M1012 1065h168l-6 16q-2 5.700-6 5.700H1028q-3 0-4.500-3z" fill="url(#edit)"/>
<g font-size="11">
<text x="1042.700" y="1080" fill="#eaeaea" stroke="#eaeaea" stroke-width=".15" textLength="17.300" lengthAdjust="spacingAndGlyphs">Edit</text>
<text x="1201.700" y="1080" fill="#aaa" textLength="35" lengthAdjust="spacingAndGlyphs">Preview</text>
<text x="1360" y="1080" fill="#aaa" textLength="55.300" lengthAdjust="spacingAndGlyphs">Side by Side</text>
</g>
<rect x="1141" y="1067" width="24.700" height="18" rx="2.500" fill="#6a6a6a" stroke="#555"/>
<path d="M1109 1067h32v18h-32a3 3 0 0 1-3-3v-12a3 3 0 0 1 3-3z" fill="#246aa9"/>
<g font-size="11.500" font-weight="bold">
<text x="1110" y="1080" fill="#f0f4f8" textLength="27.700" lengthAdjust="spacingAndGlyphs">Visual</text>
<text x="1144" y="1080" fill="#e8e8e8" textLength="18" lengthAdjust="spacingAndGlyphs">Raw</text>
</g>
</g>

<!-- Watermark -->
<rect x="1728" y="1237" width="122.700" height="37.700" fill="#fff"/>
<g style="paint-order:stroke" stroke="#a8a8a8" stroke-width="1.500" fill="#111">
<text x="1753" y="1258" font-size="17" font-family="&quot;Liberation Sans&quot;,&quot;Noto Sans CJK SC&quot;,sans-serif" textLength="69" lengthAdjust="spacing">思洋互动</text>
<text x="1747" y="1270" font-size="11.500" font-weight="bold" textLength="83" lengthAdjust="spacingAndGlyphs">www.ciya.cn</text>
</g>
</svg>
</body></html>
